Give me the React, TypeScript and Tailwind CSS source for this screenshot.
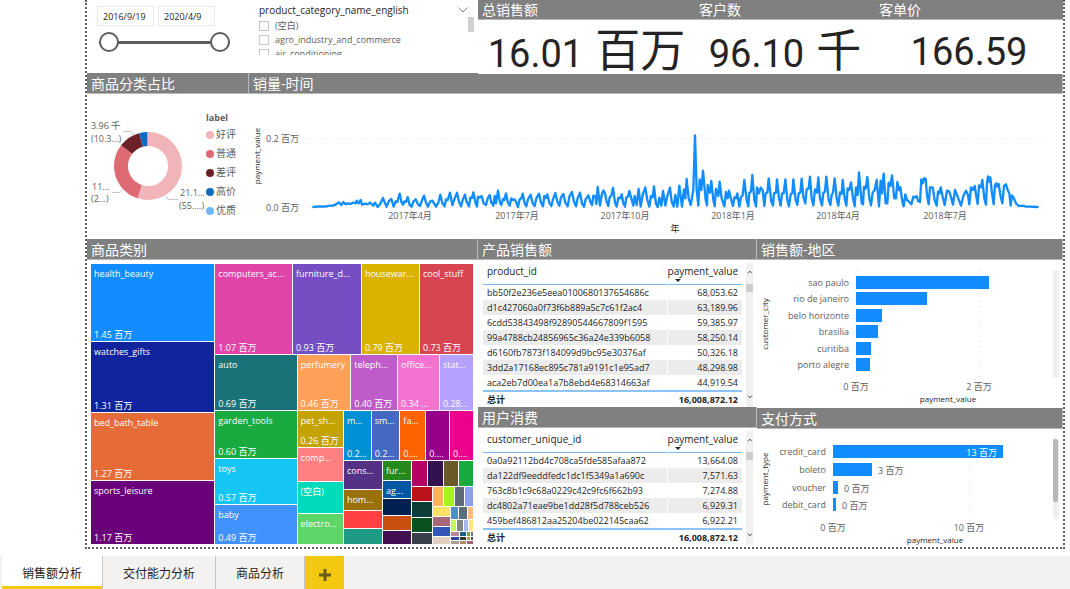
import { useState } from 'react';

type Leaf = { size: number; color: string; name?: string; value?: string };
type Group = { size: number; dir: 'row' | 'col'; items: TreeNode[] };
type TreeNode = Leaf | Group;

const row = (size: number, ...items: TreeNode[]): Group => ({ size, dir: 'row', items });
const col = (size: number, ...items: TreeNode[]): Group => ({ size, dir: 'col', items });
const leaf = (size: number, color: string, name?: string, value?: string): Leaf => ({
  size,
  color,
  name,
  value,
});

const tree = row(
  1,
  col(
    124,
    leaf(78, 'bg-[#118dff]', 'health_beauty', '1.45 百万'),
    leaf(70, 'bg-[#12239e]', 'watches_gifts', '1.31 百万'),
    leaf(68, 'bg-[#e66c37]', 'bed_bath_table', '1.27 百万'),
    leaf(63, 'bg-[#6b007b]', 'sports_leisure', '1.17 百万')
  ),
  col(
    259,
    row(
      90,
      leaf(78, 'bg-[#e044a7]', 'computers_ac...', '1.07 百万'),
      leaf(69, 'bg-[#744ec2]', 'furniture_d...', '0.93 百万'),
      leaf(58, 'bg-[#d9b300]', 'housewar...', '0.79 百万'),
      leaf(54, 'bg-[#d64550]', 'cool_stuff', '0.73 百万')
    ),
    row(
      190,
      col(
        82,
        leaf(56, 'bg-[#197278]', 'auto', '0.69 百万'),
        leaf(48, 'bg-[#1aab40]', 'garden_tools', '0.60 百万'),
        leaf(46, 'bg-[#15c6f4]', 'toys', '0.57 百万'),
        leaf(40, 'bg-[#4092ff]', 'baby', '0.49 百万')
      ),
      col(
        177,
        row(
          56,
          leaf(54, 'bg-[#ffa058]', 'perfumery', '0.46 百万'),
          leaf(47, 'bg-[#be5dc9]', 'teleph...', '0.40 百万'),
          leaf(42, 'bg-[#f472d0]', 'office...', '0.34 ...'),
          leaf(34, 'bg-[#b5a1ff]', 'stat...', '0.28...')
        ),
        row(
          134,
          col(
            46,
            leaf(37, 'bg-[#c4a200]', 'pet_sh...', '0.26 百万'),
            leaf(34, 'bg-[#ff8080]', 'comp...'),
            leaf(32, 'bg-[#00dbbc]', '(空白)'),
            leaf(31, 'bg-[#5bd667]', 'electro...')
          ),
          col(
            131,
            row(
              50,
              leaf(28, 'bg-[#0091d5]', 'm...', '0.2...'),
              leaf(29, 'bg-[#4668c5]', 'sm...', '0.2...'),
              leaf(26, 'bg-[#ff6300]', 'fa...', '0....'),
              leaf(24, 'bg-[#99008a]', '', '0....'),
              leaf(24, 'bg-[#ec008c]', '', '0....')
            ),
            row(
              84,
              col(
                39,
                leaf(29, 'bg-[#533285]', 'cons...'),
                leaf(21, 'bg-[#99700a]', 'hom...'),
                leaf(18, 'bg-[#ff4141]'),
                leaf(16, 'bg-[#1f9a85]')
              ),
              col(
                29,
                leaf(20, 'bg-[#25891c]', 'fur...'),
                leaf(18, 'bg-[#0057a2]', 'ag...'),
                leaf(17, 'bg-[#002050]'),
                leaf(15, 'bg-[#c94f0f]'),
                leaf(14, 'bg-[#450f54]')
              ),
              col(
                62,
                row(
                  25,
                  leaf(16, 'bg-[#b60064]'),
                  leaf(16, 'bg-[#34124f]'),
                  leaf(15, 'bg-[#6a5a29]'),
                  leaf(15, 'bg-[#1aab40]')
                ),
                row(
                  59,
                  col(
                    20,
                    leaf(16, 'bg-[#ba141a]'),
                    leaf(16, 'bg-[#0c3d37]'),
                    leaf(15, 'bg-[#0b511f]'),
                    leaf(12, 'bg-[#37404a]')
                  ),
                  col(
                    42,
                    row(
                      20,
                      leaf(12, 'bg-[#ffb25c]'),
                      leaf(11, 'bg-[#a6f519]'),
                      leaf(10, 'bg-[#5f6b77]'),
                      leaf(9, 'bg-[#8ca0ee]')
                    ),
                    row(
                      39,
                      col(
                        18,
                        leaf(11, 'bg-[#ffe066]'),
                        leaf(10, 'bg-[#a66778]'),
                        leaf(10, 'bg-[#3257b8]'),
                        leaf(8, 'bg-[#dfd0c0]')
                      ),
                      col(
                        24,
                        row(
                          14,
                          leaf(9, 'bg-[#4a8fc8]'),
                          leaf(9, 'bg-[#5f6b77]'),
                          leaf(6, 'bg-[#fdbb80]')
                        ),
                        row(
                          12,
                          leaf(7, 'bg-[#c5f45b]'),
                          leaf(7, 'bg-[#808688]'),
                          leaf(5, 'bg-[#a3b7f5]'),
                          leaf(5, 'bg-[#ffe57a]')
                        ),
                        row(
                          13,
                          col(
                            10,
                            leaf(5, 'bg-[#b6899a]'),
                            leaf(4, 'bg-[#29479a]'),
                            leaf(4, 'bg-[#a99c94]')
                          ),
                          col(
                            7,
                            leaf(5, 'bg-[#17608c]'),
                            leaf(4, 'bg-[#2b2f36]'),
                            leaf(4, 'bg-[#b08a62]')
                          ),
                          col(
                            7,
                            row(5, leaf(3, 'bg-[#7aa52b]'), leaf(3, 'bg-[#6d7580]')),
                            row(4, leaf(3, 'bg-[#b99b3c]'), leaf(3, 'bg-[#43507a]')),
                            leaf(4, 'bg-[#a0627a]')
                          )
                        )
                      )
                    )
                  )
                )
              )
            )
          )
        )
      )
    )
  )
);

const TreeCell = ({ node }: { node: TreeNode }) => {
  if ('items' in node) {
    return (
      <div
        className={`flex gap-px min-w-0 min-h-0 ${node.dir === 'row' ? 'flex-row' : 'flex-col'}`}
        style={{ flex: `${node.size} 1 0px` }}
      >
        {node.items.map((item, index) => (
          <TreeCell key={index} node={item} />
        ))}
      </div>
    );
  }
  return (
    <div
      className={`flex flex-col justify-between min-w-0 min-h-0 overflow-hidden whitespace-nowrap text-[9px] leading-3 text-white ${node.color}`}
      style={{ flex: `${node.size} 1 0px` }}
    >
      {node.name !== undefined && <span className="pl-[3px] pt-1">{node.name}</span>}
      {node.value && <span className="pl-[3px]">{node.value}</span>}
    </div>
  );
};

const Title = ({ children }: any) => (
  <h2 className="h-[21px] pl-1 bg-[#808080] border-b border-r border-[#b8b8b8] text-[14px] leading-[21px] text-white whitespace-nowrap overflow-hidden">
    {children}
  </h2>
);

const Card = ({ title, value, unit }: { title: string; value: string; unit?: string }) => (
  <section className="relative z-10 min-w-0 bg-white -mb-px">
    <h2 className="h-5 pl-1 bg-[#808080] border-b border-[#b8b8b8] text-[14px] leading-[19px] text-white">
      {title}
    </h2>
    <p className="flex items-baseline justify-center gap-3 pt-2.5 h-[54px] text-[38px] leading-[44px] whitespace-nowrap font-['Roboto','Noto_Sans_CJK_SC',sans-serif]">
      {value}
      {unit && <span className="text-[45px]">{unit}</span>}
    </p>
  </section>
);

const DateFilter = () => {
  const [from, setFrom] = useState('2016/9/19');
  const [to, setTo] = useState('2020/4/9');
  const [low, setLow] = useState(0);
  const [high, setHigh] = useState(100);
  const box =
    'w-[57px] h-5 pl-[5px] border border-[#eaeaea] text-[9px] text-[#252423] focus:outline-0';
  const range =
    'absolute inset-0 w-full h-5 m-0 appearance-none bg-transparent pointer-events-none [&::-webkit-slider-thumb]:pointer-events-auto [&::-webkit-slider-thumb]:appearance-none [&::-webkit-slider-thumb]:size-5 [&::-webkit-slider-thumb]:rounded-full [&::-webkit-slider-thumb]:bg-white [&::-webkit-slider-thumb]:border-2 [&::-webkit-slider-thumb]:border-[#605e5c]';

  return (
    <div className="w-[131px] pt-1.5">
      <div className="flex gap-1 -ml-0.5">
        <input className={box} aria-label="开始日期" value={from} onChange={(e) => setFrom(e.target.value)} />
        <input className={box} aria-label="结束日期" value={to} onChange={(e) => setTo(e.target.value)} />
      </div>
      <div className="relative h-5 mt-1.5 flex items-center">
        <div className="w-full h-[3px] bg-[#605e5c]" />
        <input
          type="range"
          aria-label="开始"
          className={range}
          value={low}
          onChange={(e) => setLow(Math.min(Number(e.target.value), high))}
        />
        <input
          type="range"
          aria-label="结束"
          className={range}
          value={high}
          onChange={(e) => setHigh(Math.max(Number(e.target.value), low))}
        />
      </div>
    </div>
  );
};

const CategoryFilter = () => (
  <div className="flex-1 min-w-0 pt-1 pr-1">
    <div className="flex items-center justify-between h-3 pr-1.5 text-[10px] font-medium text-[#252423]">
      <span>product_category_name_english</span>
      <svg viewBox="0 0 10 6" className="w-2.5 h-1.5" fill="none" stroke="#808080">
        <path d="M0.5 0.5 5 5 9.500.5" />
      </svg>
    </div>
    <div className="flex justify-between h-[39px] overflow-hidden">
      <div className="pt-[3px]">
        {['(空白)', 'agro_industry_and_commerce', 'air_conditioning'].map((name) => (
          <label key={name} className="flex items-center gap-1.5 h-[14px] text-[9px] text-[#605e5c]">
            <input
              type="checkbox"
              className="appearance-none size-2.5 border border-[#c8c6c4] checked:bg-[#605e5c]"
            />
            {name}
          </label>
        ))}
      </div>
      <div className="w-1.5 h-[15px] mt-px bg-[#d2d0ce]" />
    </div>
  </div>
);

const labels = [
  { name: '好评', dot: 'bg-[#f0b4b9]' },
  { name: '普通', dot: 'bg-[#de6a73]' },
  { name: '差评', dot: 'bg-[#6b2127]' },
  { name: '高价', dot: 'bg-[#0d6abf]' },
  { name: '优质', dot: 'bg-[#70b9ff]' },
];

const slices = [
  { start: 0, part: 55, color: '#f0b4b9' },
  { start: 55, part: 30.5, color: '#de6a73' },
  { start: 85.5, part: 10.3, color: '#6b2127' },
  { start: 95.8, part: 3.9, color: '#0d6abf' },
  { start: 99.7, part: 0.3, color: '#70b9ff' },
];

const Donut = () => (
  <div className="flex h-[145px]">
    <svg viewBox="0 0 118 145" className="w-[118px] h-[145px] text-[9px]" fill="#605e5c">
      {slices.map((s) => (
        <circle
          key={s.start}
          cx="61"
          cy="72"
          r="27"
          fill="none"
          stroke={s.color}
          strokeWidth="14"
          pathLength="100"
          strokeDasharray={`${s.part} ${100 - s.part}`}
          strokeDashoffset={-s.start}
          transform="rotate(-90 61 72)"
        />
      ))}
      <g fill="none" stroke="#c8c6c4">
        <path d="M36 37.500h8l3 4" />
        <path d="M25 98.500h8l3-3" />
        <path d="M79 102l2 3.500h10" />
      </g>
      <text x="4" y="35">3.96 千</text>
      <text x="4" y="48">(10.3...)</text>
      <text x="5" y="96">11...</text>
      <text x="4" y="108">(2...)</text>
      <text x="93" y="102">21.1...</text>
      <text x="92" y="115">(55....)</text>
    </svg>
    <div className="pt-[18px] pl-px text-[#605e5c]">
      <p className="h-3 text-[9px] leading-3 font-bold">label</p>
      <ul className="pt-px">
        {labels.map((item) => (
          <li key={item.name} className="flex items-center gap-0.5 h-[19px] text-[10px]">
            <span className={`size-2 rounded-full ${item.dot}`} />
            {item.name}
          </li>
        ))}
      </ul>
    </div>
  </div>
);

// daily payments, three units per pixel
const daily =
  '40,351 60,349 75,350 90,347 100,347 108,343 116,337 124,345 130,336 136,343 142,340 150,342 160,338 168,340 170,332 176,340 182,330 186,344 195,341 203,343 210,338 220,347 225,338 233,351 240,343 249,324 255,340 260,350 266,334 274,327 281,350 287,334 292,336 299,311 305,338 309,344 313,334 318,336 323,321 329,345 335,350 340,335 347,328 354,343 360,348 366,331 372,317 378,338 384,350 390,335 397,332 408,350 415,338 421,314 427,340 434,349 438,328 443,330 450,308 457,345 463,328 471,308 477,335 483,349 488,330 495,314 500,335 507,349 511,323 516,324 520,307 527,340 531,350 534,320 539,323 545,318 551,340 558,345 563,325 569,315 574,338 580,347 584,318 588,340 594,302 600,338 604,345 609,327 613,330 618,310 623,335 629,347 634,325 639,330 644,328 650,340 654,351 659,328 664,325 668,311 674,340 679,349 684,328 692,314 698,340 704,348 709,325 717,311 723,338 729,349 733,318 738,324 742,313 748,338 754,348 759,328 766,309 772,335 778,347 783,322 790,312 796,338 803,349 808,320 816,306 822,335 828,349 833,325 840,308 846,340 852,350 857,328 865,316 871,335 876,345 880,317 886,320 889,342 893,291 900,347 905,315 910,301 915,310 920,335 925,348 929,322 934,317 939,294 945,338 950,350 955,323 961,325 965,313 970,340 975,350 979,322 984,320 988,303 994,325 1000,347 1004,318 1010,345 1016,297 1022,350 1028,315 1036,292 1042,330 1048,350 1053,318 1058,322 1062,289 1068,342 1073,351 1078,323 1084,347 1089,303 1096,347 1102,318 1110,293 1115,335 1121,350 1126,315 1132,350 1138,287 1146,350 1152,298 1156,325 1160,267 1166,325 1172,345 1180,300 1185,136 ' +
  '1190,300 1195,347 1199,268 1204,300 1209,242 1217,330 1221,346 1223,285 1230,308 1234,273 1240,330 1244,349 1248,296 1255,318 1259,275 1265,325 1273,349 1278,306 1283,325 1287,302 1295,335 1299,348 1303,322 1308,325 1312,310 1318,350 1323,322 1328,316 1333,270 1340,330 1345,349 1348,308 1353,305 1357,255 1363,330 1368,349 1371,292 1377,310 1382,293 1388,300 1393,348 1397,310 1402,308 1406,265 1414,335 1419,347 1422,310 1428,308 1431,268 1437,325 1442,347 1446,310 1451,310 1456,268 1462,330 1467,349 1472,313 1477,310 1480,268 1487,330 1492,345 1496,310 1501,308 1505,266 1510,320 1516,340 1520,298 1526,295 1530,260 1535,325 1540,346 1545,298 1551,308 1555,262 1560,325 1566,346 1570,308 1575,305 1579,260 1586,330 1591,345 1595,315 1599,308 1604,265 1610,325 1615,347 1620,307 1625,312 1628,270 1634,325 1639,347 1643,295 1648,300 1653,277 1659,325 1664,349 1668,292 1673,315 1677,247 1685,340 1689,343 1692,290 1697,296 1702,261 1708,325 1713,346 1718,308 1724,300 1730,270 1737,349 1742,272 1746,310 1751,251 1757,340 1762,340 1766,278 1771,288 1776,256 1783,325 1788,325 1792,276 1797,300 1801,292 1807,335 1811,349 1816,313 1821,330 1827,335 1834,343 1840,320 1846,322 1850,318 1854,333 1860,336 1864,268 1868,280 1872,265 1877,266 1881,315 1886,343 1890,292 1898,292 1904,330 1910,347 1914,305 1918,310 1922,292 1928,320 1934,345 1941,302 1948,305 1954,325 1959,344 1965,300 1973,320 1983,347 1990,318 1998,302 2004,315 2008,343 2013,292 2018,300 2024,288 2029,320 2033,342 2037,286 2043,292 2047,270 2053,325 2058,344 2061,280 2064,259 2068,275 2071,262 2076,310 2081,343 2085,285 2089,280 2092,290 2096,282 2102,320 2107,340 2112,288 2118,283 2123,300 2128,310 2132,347 2136,316 2142,325 2148,340 2156,348 2165,347 2180,350 2190,350 2213,351';

const months = [
  { x: 161, name: '2017年4月' },
  { x: 268, name: '2017年7月' },
  { x: 376, name: '2017年10月' },
  { x: 484, name: '2018年1月' },
  { x: 589, name: '2018年4月' },
  { x: 696, name: '2018年7月' },
];

const LineChart = () => (
  <svg viewBox="0 0 814 145" className="w-full text-[9px]" fill="#605e5c">
    <g stroke="#e0e0e0" strokeDasharray="1 4">
      <path d="M57 44.500h740" />
      <path d="M57 113.500h740" />
    </g>
    <text x="17" y="48">0.2 百万</text>
    <text x="17" y="117">0.0 百万</text>
    <text transform="translate(11 62) rotate(-90)" textAnchor="middle" className="text-[8px]" fill="#252423">
      payment_value
    </text>
    <polyline
      points={daily}
      transform="translate(51 -4) scale(0.33333)"
      fill="none"
      stroke="#118dff"
      strokeWidth="7"
      strokeLinejoin="round"
      strokeLinecap="round"
    />
    {months.map((m) => (
      <text key={m.name} x={m.x} y="125" textAnchor="middle">
        {m.name}
      </text>
    ))}
    <text x="426" y="138" textAnchor="middle" fill="#252423">年</text>
  </svg>
);

const ScrollBar = () => (
  <div className="flex flex-col items-center w-[7px] mt-[3px] bg-[#f0f0f0]">
    <svg viewBox="0 0 6 4" className="w-1.5 h-1 mt-[7px] mb-2.5" fill="none" stroke="#606060">
      <path d="M1 3.500 3 1l2 2.500" />
    </svg>
    <div className="w-full h-2 bg-[#cdcdcd]" />
    <svg viewBox="0 0 6 4" className="w-1.5 h-1 mt-auto mb-2" fill="none" stroke="#606060">
      <path d="M1 .5 3 3 5 .5" />
    </svg>
  </div>
);

const DataTable = ({ id, rows }: { id: string; rows: string[][] }) => (
  <div className="flex gap-1 pl-[5px] pr-1">
    <table className="flex-1 w-full border-collapse text-[9px] leading-[15px] text-[#252423] whitespace-nowrap">
      <thead>
        <tr className="h-6 border-b border-[#74b8f8] text-[10px] align-top">
          <th className="pl-1 pt-1 text-left font-normal">{id}</th>
          <th className="relative pr-1 pt-1 text-right font-normal">
            payment_value
            <svg viewBox="0 0 6 3" className="absolute left-2 bottom-0.5 w-1.5 h-[3px]" fill="#252423">
              <path d="M0 0h6L3 3z" />
            </svg>
          </th>
        </tr>
      </thead>
      <tbody>
        {rows.map((r) => (
          <tr key={r[0]} className="h-[15px] even:bg-[#ececec]">
            <td className="pl-1 border-r border-white">{r[0]}</td>
            <td className="w-[75px] pr-1 text-right">{r[1]}</td>
          </tr>
        ))}
      </tbody>
      <tfoot>
        <tr className="border-t-2 border-[#8cc4f8] font-bold">
          <td className="pl-1">总计</td>
          <td className="pr-1 text-right">16,008,872.12</td>
        </tr>
      </tfoot>
    </table>
    <ScrollBar />
  </div>
);

const products = [
  ['bb50f2e236e5eea0100680137654686c', '68,053.62'],
  ['d1c427060a0f73f6b889a5c7c61f2ac4', '63,189.96'],
  ['6cdd53843498f92890544667809f1595', '59,385.97'],
  ['99a4788cb24856965c36a24e339b6058', '58,250.14'],
  ['d6160fb7873f184099d9bc95e30376af', '50,326.18'],
  ['3dd2a17168ec895c781a9191c1e95ad7', '48,298.98'],
  ['aca2eb7d00ea1a7b8ebd4e68314663af', '44,919.54'],
];

const customers = [
  ['0a0a92112bd4c708ca5fde585afaa872', '13,664.08'],
  ['da122df9eeddfedc1dc1f5349a1a690c', '7,571.63'],
  ['763c8b1c9c68a0229c42c9fc6f662b93', '7,274.88'],
  ['dc4802a71eae9be1dd28f5d788ceb526', '6,929.31'],
  ['459bef486812aa25204be022145caa62', '6,922.21'],
];

const cities = [
  { name: 'sao paulo', y: 16, w: 133 },
  { name: 'rio de janeiro', y: 32, w: 71 },
  { name: 'belo horizonte', y: 49, w: 26 },
  { name: 'brasilia', y: 65, w: 22 },
  { name: 'curitiba', y: 82, w: 15 },
  { name: 'porto alegre', y: 98, w: 14 },
];

const CityChart = () => (
  <svg viewBox="0 0 306 148" className="w-full text-[9px]" fill="#605e5c">
    <path d="M99.500 11v108M222.500 11v108" stroke="#e0e0e0" strokeDasharray="1 4" />
    {cities.map((c) => (
      <g key={c.name}>
        <text x="92" y={c.y + 10} textAnchor="end">{c.name}</text>
        <rect x="99" y={c.y} width={c.w} height="13" fill="#118dff" />
      </g>
    ))}
    <text x="99" y="130" textAnchor="middle">0 百万</text>
    <text x="222" y="130" textAnchor="middle">2 百万</text>
    <g className="text-[8px]" fill="#252423" textAnchor="middle">
      <text x="191" y="142">payment_value</text>
      <text transform="translate(11 64) rotate(-90)">customer_city</text>
    </g>
    <rect x="296" y="10" width="6" height="108" rx="2" fill="#eeeeee" />
  </svg>
);

const payments = [
  { name: 'credit_card', y: 16, w: 170, label: '13 百万', inside: true },
  { name: 'boleto', y: 34, w: 39, label: '3 百万' },
  { name: 'voucher', y: 52, w: 5, label: '0 百万' },
  { name: 'debit_card', y: 69, w: 3, label: '0 百万' },
];

const PaymentChart = () => (
  <svg viewBox="0 0 306 118" className="w-full text-[9px]" fill="#605e5c">
    <path d="M76.500 11v82M212.500 11v82" stroke="#e0e0e0" strokeDasharray="1 4" />
    {payments.map((p) => (
      <g key={p.name}>
        <text x="69" y={p.y + 10} textAnchor="end">{p.name}</text>
        <rect x="76" y={p.y} width={p.w} height="13" fill="#118dff" />
        <text
          x={p.inside ? 70 + p.w : 82 + p.w}
          y={p.y + 11}
          textAnchor={p.inside ? 'end' : 'start'}
          fill={p.inside ? '#ffffff' : '#605e5c'}
        >
          {p.label}
        </text>
      </g>
    ))}
    <text x="76" y="102" textAnchor="middle">0 百万</text>
    <text x="212" y="102" textAnchor="middle">10 百万</text>
    <g className="text-[8px]" fill="#252423" textAnchor="middle">
      <text x="178" y="114">payment_value</text>
      <text transform="translate(11 50) rotate(-90)">payment_type</text>
    </g>
    <rect x="296" y="10" width="6" height="80" rx="2" fill="#eeeeee" />
    <rect x="296" y="10" width="5" height="63" rx="2" fill="#b8b8b8" />
  </svg>
);

const Tabs = () => {
  const [active, setActive] = useState(0);
  return (
    <nav className="flex h-[33px] mt-[7px] pl-0.5 bg-[#f3f2f1] text-[12px] text-[#252423]">
      {['销售额分析', '交付能力分析', '商品分析'].map((name, index) => (
        <button
          key={name}
          type="button"
          onClick={() => setActive(index)}
          className={`px-5 pt-0.5 border-r border-[#c8c6c4] ${
            active === index ? 'bg-white shadow-[inset_0_-3px_#f2c811]' : ''
          }`}
        >
          {name}
        </button>
      ))}
      <button type="button" aria-label="新建页" className="flex items-center justify-center w-[39px] bg-[#f2c811]">
        <svg viewBox="0 0 12 12" className="size-3 mt-1" stroke="#6b5a10" strokeWidth="3">
          <path d="M6 0v12M0 6h12" />
        </svg>
      </button>
    </nav>
  );
};

const App = () => {
  return (
    <div className="bg-white text-[#252423] font-['Open_Sans','Noto_Sans_CJK_SC',sans-serif]">
      <main className="ml-[85px] mr-[5px] border-2 border-t-0 border-dotted border-[#605e5c]">
        <div className="grid grid-cols-[391fr_217fr_180fr_188fr] h-[73px]">
          <div className="flex gap-[29px] pl-3">
            <DateFilter />
            <CategoryFilter />
          </div>
          <Card title="总销售额" value="16.01" unit="百万" />
          <Card title="客户数" value="96.10" unit="千" />
          <Card title="客单价" value="166.59" />
        </div>

        <div className="grid grid-cols-[162fr_814fr]">
          <section className="min-w-0">
            <Title>商品分类占比</Title>
            <Donut />
          </section>
          <section className="min-w-0">
            <Title>销量-时间</Title>
            <LineChart />
          </section>
        </div>

        <div className="grid grid-cols-[391fr_279fr_306fr]">
          <section className="flex flex-col min-w-0">
            <Title>商品类别</Title>
            <div className="flex h-[280px] mt-1 ml-1 mr-[5px]">
              <TreeCell node={tree} />
            </div>
          </section>
          <div className="min-w-0">
            <section className="h-[168px]">
              <Title>产品销售额</Title>
              <DataTable id="product_id" rows={products} />
            </section>
            <section>
              <Title>用户消费</Title>
              <DataTable id="customer_unique_id" rows={customers} />
            </section>
          </div>
          <div className="min-w-0">
            <section>
              <Title>销售额-地区</Title>
              <CityChart />
            </section>
            <section>
              <Title>支付方式</Title>
              <PaymentChart />
            </section>
          </div>
        </div>
      </main>
      <Tabs />
    </div>
  );
};

export default App;
